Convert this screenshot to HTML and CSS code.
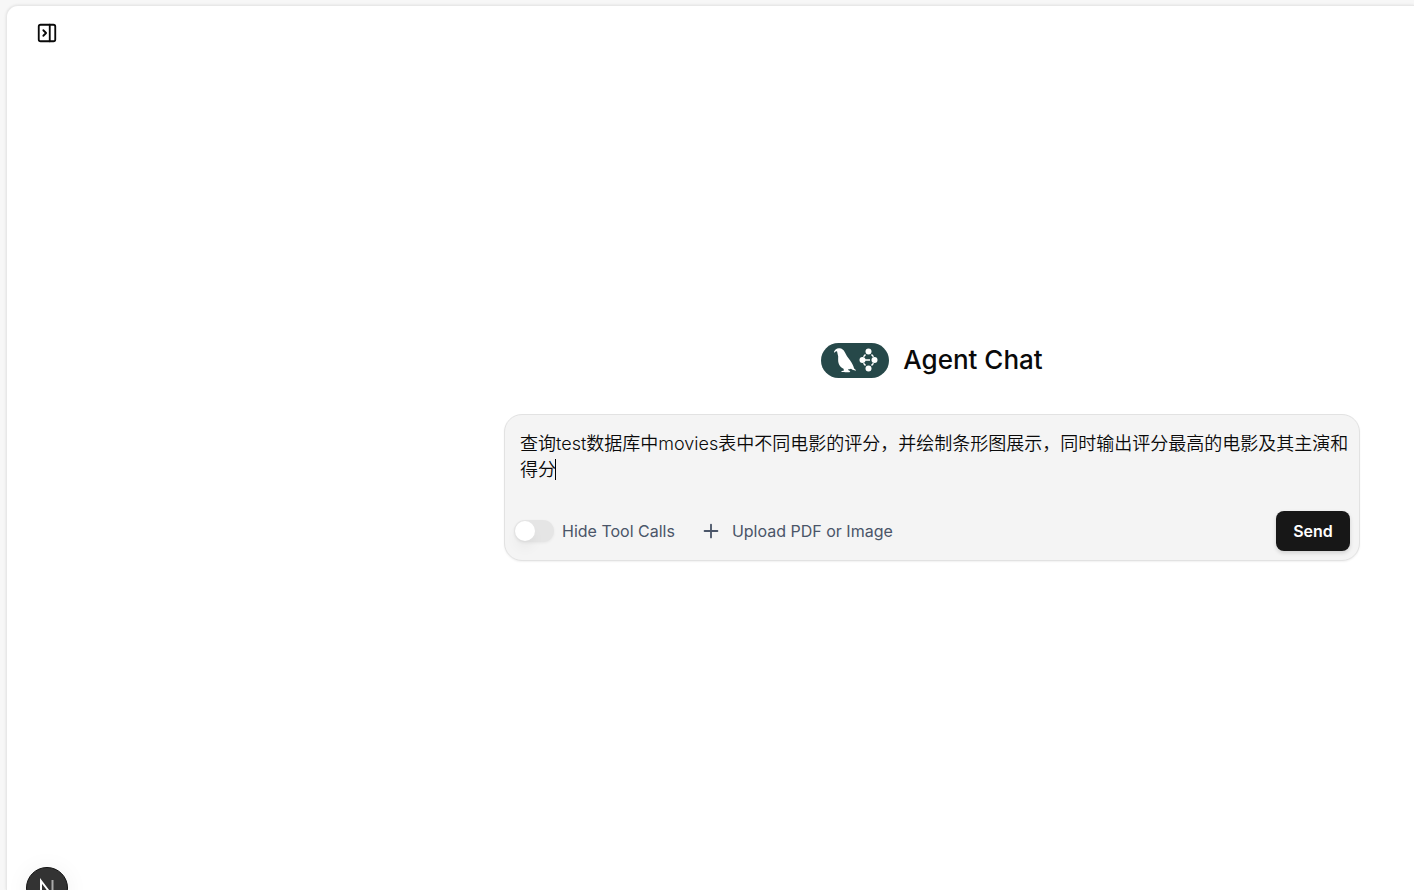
FILE: index.html
```
<!DOCTYPE html>
<html lang="zh-CN">
<head>
<meta charset="UTF-8">
<meta name="viewport" content="width=device-width, initial-scale=1.0">
<title>Agent Chat</title>
<link rel="stylesheet" href="styles.css">
</head>
<body>
<main class="panel">
    <header class="topbar">
        <button class="icon-button" type="button" aria-label="Open history">
            <svg width="22" height="22" viewBox="0 0 24 24" fill="none" stroke="currentColor" stroke-width="2" stroke-linecap="round" stroke-linejoin="round">
                <rect x="3" y="3" width="18" height="18" rx="2"/>
                <path d="M15 3v18M8 9l3 3-3 3"/>
            </svg>
        </button>
    </header>
    <section class="chat">
        <div class="brand">
            <svg class="logo" width="68" height="36" viewBox="0 0 68 36" aria-hidden="true">
                <rect y="1" width="68" height="35" rx="17.500" fill="#264849"/>
                <g fill="#fff">
                    <path d="M13 9.800C13.800 7.500 15.800 6 18.400 6.200c2.600.2 4.300 1.600 5.300 3.800l2.300 4.200 3.200 4.300c2.200 3 3.200 5.500 3.900 7.900.9.600 1.700 1.300 1.900 2.300l-3.500-.9-1.500-1c-.9.400-1.900.500-3 .2l.7 1.600 1.600.5-.8 1.200h-4.200l-1.300-.4-2.300.2-.5-.8 2.800-.9-.5-1.700c-2.500-1.200-4.200-2.900-4.900-5.400-.7-2.600-.4-5-.4-6.900l-1.200-5.100c-1-.3-2.100.5-2.800 1.700z"/>
                    <circle cx="47.500" cy="9.500" r="3"/>
                    <circle cx="41.500" cy="18" r="3"/>
                    <circle cx="53.500" cy="18" r="3"/>
                    <circle cx="47.500" cy="26.500" r="3"/>
                </g>
                <path d="M43 18h6M42.500 14.800l2-2.300M50.500 12.500l2 2.300M42.500 21.200l2 2.300M52.500 21.200l-2 2.300" fill="none" stroke="#fff" stroke-width="1.400"/>
            </svg>
            <h1>Agent Chat</h1>
        </div>
        <form class="composer">
            <div class="message">
                <textarea rows="2" aria-label="Message" spellcheck="false">查询test数据库中movies表中不同电影的评分，并绘制条形图展示，同时输出评分最高的电影及其主演和得分</textarea>
                <span class="caret"></span>
            </div>
            <div class="actions">
                <input class="switch" type="checkbox" role="switch" id="hide-tools">
                <label for="hide-tools">Hide Tool Calls</label>
                <button class="upload" type="button">
                    <svg width="22" height="22" viewBox="0 0 24 24" fill="none" stroke="currentColor" stroke-width="2" stroke-linecap="round">
                        <path d="M5 12h14M12 5v14"/>
                    </svg>
                    Upload PDF or Image
                </button>
                <button class="send" type="submit">Send</button>
            </div>
        </form>
    </section>
</main>
<button class="dev-badge" type="button" aria-label="Open dev tools">
    <svg width="40" height="40" viewBox="0 0 40 40" fill="none">
        <path d="M14 27V13L27 30" stroke="#fff" stroke-width="2"/>
        <path d="M25.500 12v12" stroke="#aaa" stroke-width="2"/>
    </svg>
</button>
</body>
</html>
```
FILE: styles.css
```
* {
    box-sizing: border-box;
}
body {
    margin: 0;
    min-height: 100vh;
    padding: 5px 0 0 6px;
    display: flex;
    background-color: #f7f7f7;
    color: #0a0a0a;
    font-family: Inter, "Noto Sans CJK SC", sans-serif;
    font-size: 16px;
    overflow: hidden;
}
button {
    border: none;
    padding: 0;
    background: none;
    color: inherit;
    font: inherit;
    cursor: pointer;
}
.panel {
    flex: 1;
    display: flex;
    flex-direction: column;
    background-color: #fff;
    border: solid #e8e8e8;
    border-width: 1px 0 0 1px;
    border-top-left-radius: 12px;
    box-shadow: 0 0 3px rgba(0, 0, 0, 0.1);
}
.topbar {
    padding: 16px 29px;
}
.icon-button {
    display: flex;
}
.chat {
    flex: 1;
    display: flex;
    flex-direction: column;
    align-items: flex-end;
    justify-content: center;
    gap: 36px;
    padding: 0 54px 48px 24px;
}
.brand,
.composer {
    width: 100%;
    max-width: 856px;
}
.brand {
    display: flex;
    align-items: center;
    justify-content: center;
    gap: 14px;
}
h1 {
    margin: 0;
    font-size: 26px;
    line-height: 36px;
    font-weight: 500;
}
.composer {
    background-color: #f4f4f4;
    border: 1px solid #e2e2e2;
    border-radius: 18px;
    box-shadow: 0 1px 2px rgba(0, 0, 0, 0.06);
}
.message {
    position: relative;
}
textarea {
    display: block;
    width: 100%;
    height: 86px;
    padding: 16px 8px 0 15px;
    border: none;
    outline: none;
    resize: none;
    background: none;
    color: #0a0a0a;
    font-family: inherit;
    font-size: 18px;
    font-weight: 350;
    line-height: 26px;
}
.caret {
    position: absolute;
    left: 50px;
    top: 44px;
    width: 1px;
    height: 21px;
    background-color: #000;
}
.actions {
    display: flex;
    align-items: center;
    padding: 10px 9px 9px;
    color: #4a5568;
}
.switch {
    appearance: none;
    display: flex;
    width: 40px;
    height: 22px;
    margin: 0 8px 0 0;
    padding: 1px;
    border-radius: 11px;
    background-color: #e5e5e5;
    box-shadow: 0 1px 3px rgba(0, 0, 0, 0.06);
}
.switch::before {
    content: "";
    width: 20px;
    height: 20px;
    border-radius: 50%;
    background-color: #fff;
    box-shadow: 0 8px 12px rgba(0, 0, 0, 0.04);
}
.switch:checked {
    background-color: #171717;
}
.switch:checked::before {
    margin-left: auto;
}
.upload {
    display: flex;
    align-items: center;
    gap: 10px;
    margin-left: 25px;
}
.send {
    margin-left: auto;
    width: 74px;
    height: 40px;
    border-radius: 8px;
    background-color: #171717;
    color: #fff;
    font-weight: 600;
    box-shadow: 0 2px 4px rgba(0, 0, 0, 0.15);
}
.dev-badge {
    position: fixed;
    left: 26px;
    bottom: -19px;
    width: 42px;
    height: 42px;
    border-radius: 50%;
    background-color: #333;
    border: 1px solid #111;
    display: flex;
    align-items: center;
    justify-content: center;
    box-shadow: 0 2px 24px rgba(0, 0, 0, 0.06);
}
```
